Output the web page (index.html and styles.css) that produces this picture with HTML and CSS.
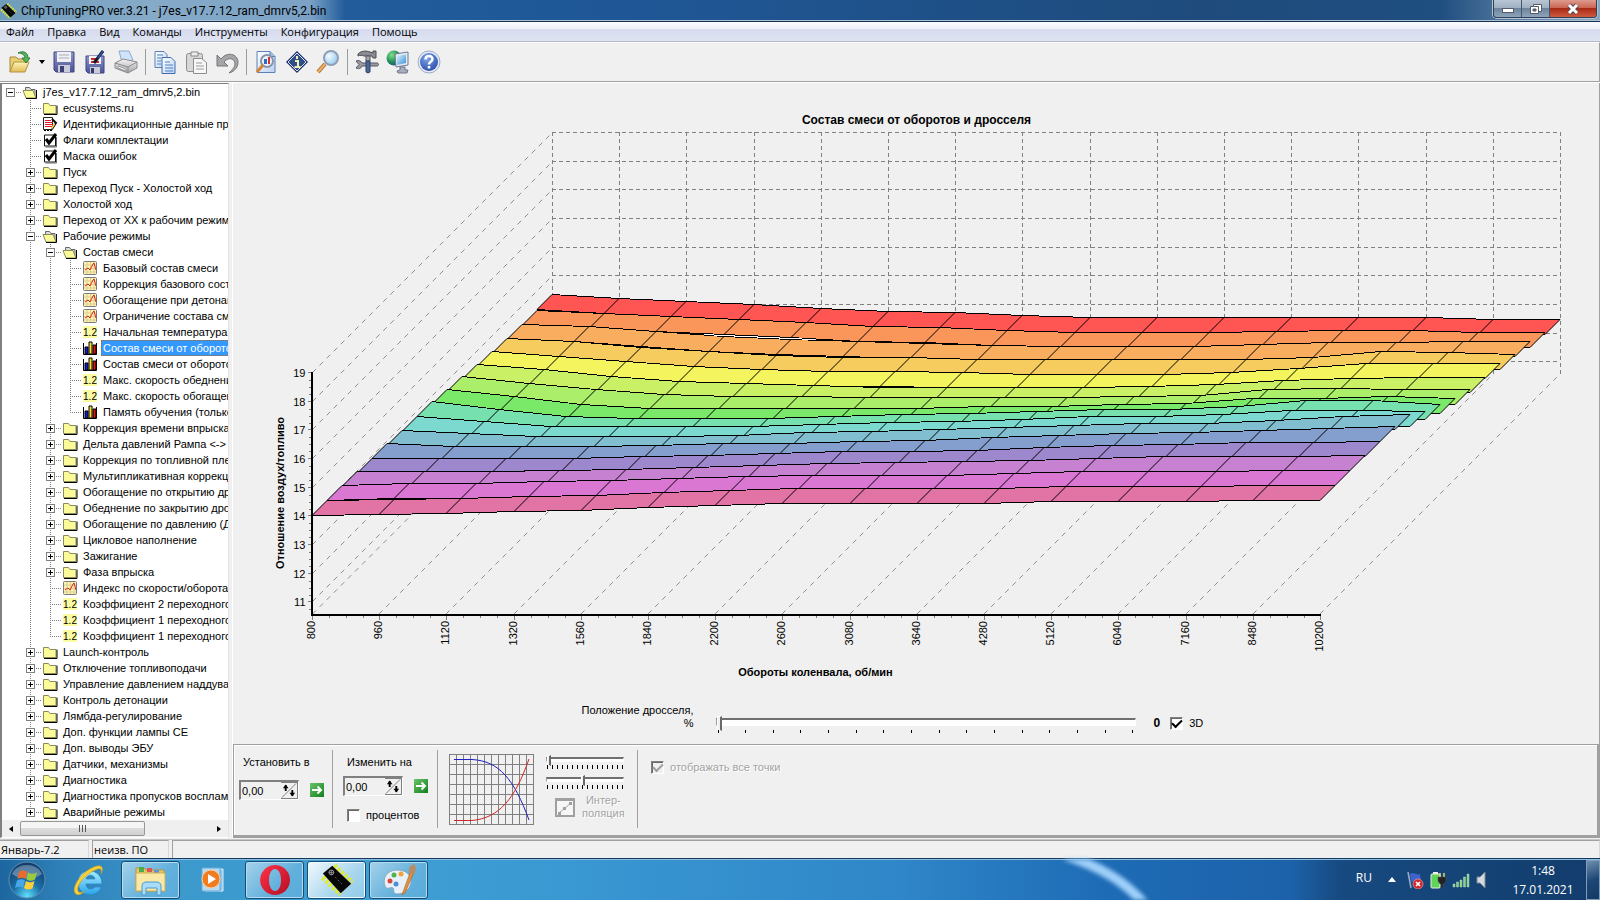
FILE: index.html
```html
<!DOCTYPE html>
<html lang="ru">
<head>
<meta charset="utf-8">
<title>ChipTuningPRO ver.3.21 - j7es_v17.7.12_ram_dmrv5,2.bin</title>
<link rel="stylesheet" href="styles.css">
</head>
<body>
<svg class="defs" width="0" height="0" aria-hidden="true">
  <defs>
    <linearGradient id="gFolder" x1="0" y1="0" x2="0" y2="1"><stop offset="0" stop-color="#fdf3b8"/><stop offset="1" stop-color="#e2bd55"/></linearGradient>
    <linearGradient id="gPage" x1="0" y1="0" x2="1" y2="1"><stop offset="0" stop-color="#fff"/><stop offset="1" stop-color="#b9d2f2"/></linearGradient>
    <linearGradient id="gFloppy" x1="0" y1="0" x2="0" y2="1"><stop offset="0" stop-color="#8f97cf"/><stop offset="1" stop-color="#4b5495"/></linearGradient>
    <linearGradient id="gGrey" x1="0" y1="0" x2="0" y2="1"><stop offset="0" stop-color="#f4f4f4"/><stop offset="1" stop-color="#a5a5a8"/></linearGradient>
    <radialGradient id="gLens" cx=".35" cy=".35" r=".8"><stop offset="0" stop-color="#f2fbff"/><stop offset="1" stop-color="#8fc4ee"/></radialGradient>
    <radialGradient id="gHelp" cx=".4" cy=".3" r=".8"><stop offset="0" stop-color="#7fa4e8"/><stop offset="1" stop-color="#2547a8"/></radialGradient>
    <radialGradient id="gGlobe" cx=".35" cy=".3" r=".8"><stop offset="0" stop-color="#7fe08a"/><stop offset=".6" stop-color="#1f8a55"/><stop offset="1" stop-color="#1b4d92"/></radialGradient>
    <linearGradient id="gScreen" x1="0" y1="0" x2="1" y2="1"><stop offset="0" stop-color="#d8f3ff"/><stop offset="1" stop-color="#3c8fd6"/></linearGradient>
    <linearGradient id="gGo" x1="0" y1="0" x2="1" y2="1"><stop offset="0" stop-color="#69c46a"/><stop offset="1" stop-color="#127f1c"/></linearGradient>
    <radialGradient id="gOrb" cx=".5" cy=".95" r=".9"><stop offset="0" stop-color="#5fe0ff"/><stop offset=".45" stop-color="#1b6fa8"/><stop offset="1" stop-color="#123e6c"/></radialGradient>
    <linearGradient id="gIe" x1="0" y1="0" x2="0" y2="1"><stop offset="0" stop-color="#a6ecff"/><stop offset="1" stop-color="#2aa5ea"/></linearGradient>
    <linearGradient id="gOpera" x1="0" y1="0" x2="1" y2="1"><stop offset="0" stop-color="#ff3347"/><stop offset="1" stop-color="#b60d22"/></linearGradient>
    <g id="i-chip">
      <path d="M3 13 22 31M15 1l19 18" stroke="#e2ea2c" stroke-width="6" stroke-dasharray="3 2"/>
      <path d="M3 9 13 1 33 20 22 30z" fill="#070707"/>
      <circle cx="12" cy="8" r="2.500" fill="none" stroke="#aaa"/><path d="M9.500 8h5M12 5.500v5" stroke="#aaa" stroke-width=".7"/><path d="M16 13l8 8" stroke="#666" stroke-dasharray="2 2"/>
    </g>
    <g id="t-folder"><path d="M1.500 3.500h5l1.500 2h6v8h-12.500z" fill="#fbfb9a" stroke="#8a8a5a"/><path d="M2 14.500h13V5.500" fill="none" stroke="#000"/></g>
    <g id="t-open"><path d="M3.500 3.500h4l1.500 2h4v8h-9z" fill="#ddd" stroke="#666"/><path d="M1 6.500h10l3 7.500H4z" fill="#fbfb9a" stroke="#8a8a5a"/><path d="M4 14.500h10.500V6" fill="none" stroke="#000"/></g>
    <g id="t-ident"><path d="M1.500 1.500h9v12h-9z" fill="#fff" stroke="#222"/><path d="M3 4.500h6M3 6.500h8M3 8.500h8M3 10.500h7" stroke="#e0162b"/><path d="M2 14.500h9" stroke="#000" stroke-dasharray="2 1"/><path d="M10 3l4 4-4 6" fill="none" stroke="#111" stroke-width="2"/><path d="M12.500 8 9.500 12.500" stroke="#f4df45" stroke-width="1.500"/></g>
    <g id="t-check"><path d="M2.500 3h11v11h-11z" fill="#fff" stroke="#111"/><path d="M14.500 5v10h-11" fill="none" stroke="#666"/><path d="M4 7l3 4 7-9" fill="none" stroke="#000" stroke-width="3"/></g>
    <g id="t-curve"><rect x="1.500" y="1.500" width="13" height="13" rx="1" fill="#fbf3b2" stroke="#7b7b7b"/><path d="M2 5h12M2 8.500h12M2 12h12M5 2v12M8.500 2v12M12 2v12" stroke="#ddd092"/><path d="M3 10l3-2 2 2 3-6 1-1 2 7" fill="none" stroke="#d8281c"/></g>
    <g id="t-num"><rect x="1" y="2" width="14" height="12" fill="#fbfba0"/><text x="8" y="12" text-anchor="middle" font-family="Liberation Sans, sans-serif" font-size="10" fill="#000">1.2</text></g>
    <g id="t-bars"><path d="M1.500 3v11.500h13V3" fill="#fff" stroke="#000"/><path d="M3 7h3v7H3z" fill="#1a1ad0" stroke="#000"/><path d="M7 2h3v12H7z" fill="#f4e42a" stroke="#000"/><path d="M11 5h3v9h-3z" fill="#d81414" stroke="#000"/></g>
    <g id="go"><rect width="14" height="14" fill="url(#gGo)"/><path d="M2 7h9M7.500 3.500 11 7l-3.500 3.500" fill="none" stroke="#fff" stroke-width="2"/></g>
  </defs>
</svg>

<header class="titlebar">
  <svg class="title-icon" viewBox="0 0 36 32"><use href="#i-chip"/></svg>
  <h1 class="title-text">ChipTuningPRO ver.3.21 - j7es_v17.7.12_ram_dmrv5,2.bin</h1>
  <div class="winbtns">
    <button class="wb" aria-label="Свернуть"><svg width="14" height="12"><rect x="1.500" y="5.500" width="11" height="4" fill="#fff" stroke="#555b6b"/></svg></button>
    <button class="wb" aria-label="Развернуть"><svg width="14" height="12"><path d="M4.500 1.500h8v7h-8z" fill="#fff" stroke="#555b6b"/><path d="M1.500 3.500h8v7h-8z" fill="#fff" stroke="#555b6b"/><path d="M4 6h3v2H4z" fill="#667" stroke="#555b6b"/></svg></button>
    <button class="wb wb-close" aria-label="Закрыть"><svg width="14" height="12"><path d="M3 2l8 8M11 2l-8 8" stroke="#5b4850" stroke-width="5"/><path d="M3 2l8 8M11 2l-8 8" stroke="#fff" stroke-width="3"/></svg></button>
  </div>
</header>

<nav class="menubar">
  <button>Файл</button><button>Правка</button><button>Вид</button><button>Команды</button><button>Инструменты</button><button>Конфигурация</button><button>Помощь</button>
</nav>

<div class="toolbar">
  <button class="tb" aria-label="Открыть"><svg viewBox="0 0 24 24"><path d="M2 22V7h6l2 2h9v4" fill="#e9cf74" stroke="#a8893a"/><path d="M2 22 6 12h15l-4 10z" fill="url(#gFolder)" stroke="#b0923f"/><path d="M10 3c6-3 10 0 10 5h2l-4 5-4-5h3c0-3-3-5-7-5z" fill="#57b35c" stroke="#2f7d39"/></svg></button>
  <button class="tb-drop" aria-label="Недавние файлы"><svg viewBox="0 0 6 4"><path d="M0 0h6L3 4z"/></svg></button>
  <button class="tb" aria-label="Сохранить"><svg viewBox="0 0 24 24"><path d="M2 2h20v20H4l-2-2z" fill="url(#gFloppy)" stroke="#3f4780"/><path d="M5 2h14v10H5z" fill="#eef0f4"/><path d="M7 5h10M7 8h10" stroke="#a9adba"/><path d="M6 15h12v7H6z" fill="#c9ccd8"/><path d="M8 16h4v6H8z" fill="#3b4177"/></svg></button>
  <button class="tb" aria-label="Сохранить как"><svg viewBox="0 0 24 24"><path d="M3 6h18v17H5l-2-2z" fill="url(#gFloppy)" stroke="#3f4780"/><path d="M6 6h12v8H6z" fill="#f4f4f7"/><path d="M8 9h6M8 12h8" stroke="#d02a2a" stroke-width="2"/><path d="M7 17h10v6H7z" fill="#c9ccd8"/><path d="M8 18h3v5H8z" fill="#333a70"/><path d="M20 1 11 13" stroke="#111a30" stroke-width="3"/><path d="M20 1l-5 7" stroke="#2b4f9c" stroke-width="2"/></svg></button>
  <button class="tb" aria-label="Печать"><svg viewBox="0 0 24 24"><path d="M5 1l10 0 4 9-11 2z" fill="#cfe4fb" stroke="#8fa9cc"/><path d="M1 13l8-4 14 3v6l-9 5L1 18z" fill="url(#gGrey)" stroke="#8b8b8f"/><path d="M1 13l13 4 9-5M14 17v6" fill="none" stroke="#8b8b8f"/><path d="M4 16l8 3v2l-8-3z" fill="#fff" stroke="#999"/></svg></button>
  <span class="tb-sep"></span>
  <button class="tb" aria-label="Копировать"><svg viewBox="0 0 24 24"><path d="M2 1.500h9l3 3v13H2z" fill="url(#gPage)" stroke="#5b82b8"/><path d="M9 7.500h9l4 4v12H9z" fill="url(#gPage)" stroke="#3f6cab"/><path d="M4 5h6M4 8h4M4 11h4M4 14h4M12 12h5M12 15h8M12 18h8M12 21h8" stroke="#4c83c8"/></svg></button>
  <button class="tb" aria-label="Вставить"><svg viewBox="0 0 24 24"><rect x="2.500" y="3.500" width="16" height="18" rx="2" fill="#d7d7d7" stroke="#8e8e8e"/><path d="M7 2h7v4H7z" fill="#eee" stroke="#888"/><path d="M9.500 8.500h8l5 4v11h-13z" fill="#f7f7f7" stroke="#8e8e8e"/><path d="M12 13h6M12 16h8M12 19h8" stroke="#999"/></svg></button>
  <button class="tb" aria-label="Отменить"><svg viewBox="0 0 24 24"><path d="M2 5v11h11l-4-4c5-6 11-3 11 2 0 3-3 6-6 9 7-2 9-7 9-11C23 4 12 1 6 9z" fill="#a5a5a8" stroke="#77777b"/></svg></button>
  <span class="tb-sep"></span>
  <button class="tb" aria-label="Просмотр"><svg viewBox="0 0 24 24"><path d="M3 1.500h13l5 5v16H3z" fill="url(#gPage)" stroke="#5b82b8"/><path d="M16 1.500v5h5" fill="#9fc0ea" stroke="#5b82b8"/><circle cx="13" cy="11" r="6" fill="#eaf4ff" stroke="#8795a8" stroke-width="2"/><path d="M10 9h3v5h-3z" fill="#2c6cc8"/><path d="M14 7h2v7h-2z" fill="#d93232"/><path d="M9 15l-6 7" stroke="#d98336" stroke-width="3"/></svg></button>
  <button class="tb" aria-label="Информация"><svg viewBox="0 0 24 24"><path d="M12 1l11 11-11 11L1 12z" fill="#1f2c6b"/><path d="M12 3l9 9-9 9-9-9z" fill="#2f4f86" stroke="#d5def5"/><path d="M12 6v3M10 11h3v6M9.500 17h6" stroke="#f3f0b4" stroke-width="2" fill="none"/></svg></button>
  <button class="tb" aria-label="Поиск"><svg viewBox="0 0 24 24"><path d="M9 14 2 22" stroke="#b56d2b" stroke-width="4"/><path d="M9 14 2 22" stroke="#e8b069" stroke-width="2"/><circle cx="15" cy="8" r="7" fill="url(#gLens)" stroke="#8f9eb4" stroke-width="2"/></svg></button>
  <span class="tb-sep"></span>
  <button class="tb" aria-label="Настройки"><svg viewBox="0 0 24 24"><path d="M3 4c4-4 9-3 12-2l3 1V1h3v7h-3l-1-2H9C7 5 5 5 3 6z" fill="#8a8d93" stroke="#4a4c52"/><path d="M11 6h4v5h-4z" fill="#aaa" stroke="#55585f"/><path d="M1 11c3-1 5 0 6 2h15c2 0 2 3 0 3H7c-1 3-4 3-6 2l3-3.500z" fill="#989ba2" stroke="#55585f"/><path d="M11 11h4v11c0 1-4 1-4 0z" fill="#4d6694" stroke="#2f4269"/></svg></button>
  <button class="tb" aria-label="Сеть"><svg viewBox="0 0 24 24"><circle cx="8" cy="8" r="7.500" fill="url(#gGlobe)"/><path d="M9 4l13-2v13l-12 2z" fill="#e4e9f2" stroke="#6c7b94"/><path d="M11 6l9-1.500V13l-9 2z" fill="url(#gScreen)"/><path d="M14 17h5v3h3l-1 3h-9l-1-2 3-1z" fill="#a8aebb" stroke="#6f7788"/></svg></button>
  <button class="tb" aria-label="Справка"><svg viewBox="0 0 24 24"><circle cx="12" cy="12" r="11" fill="#e4e9f5" stroke="#9fabc9"/><circle cx="12" cy="12" r="9" fill="url(#gHelp)"/><path d="M8.500 9.500C8.500 5 15.500 5 15.500 9c0 3-3.500 2.500-3.500 5.500M12 16v2.500" fill="none" stroke="#fff" stroke-width="2.500"/></svg></button>
</div>

<main class="work">
  <aside class="sidebar">
    <ul class="tree" id="tree"></ul>
    <div class="hscroll">
      <button class="hs-arrow" aria-label="Влево"><svg viewBox="0 0 4 6"><path d="M4 0v6L0 3z"/></svg></button>
      <div class="hs-track"><div class="hs-thumb"><i></i><i></i><i></i></div></div>
      <button class="hs-arrow" aria-label="Вправо"><svg viewBox="0 0 4 6"><path d="M0 0v6l4-3z"/></svg></button>
    </div>
  </aside>

  <section class="content">
    <div class="chart-wrap"><svg class="chart" id="chart" viewBox="233 83 1365 617" role="img" aria-label="Состав смеси от оборотов и дросселя"></svg></div>
    <div class="throttle">
      <label class="throttle-label" for="thr">Положение дросселя,<br>%</label>
      <div class="throttle-slider">
        <input class="range range-big" id="thr" type="range" min="0" max="15" value="0">
        <div class="ticks ticks-big" id="ticksBig"></div>
      </div>
      <output class="throttle-value" for="thr">0</output>
      <label class="check"><input type="checkbox" checked><span>3D</span></label>
    </div>

    <div class="edit">
      <div class="grp grp-set">
        <label for="setv">Установить в</label>
        <div class="line">
          <span class="spin"><input id="setv" type="text" value="0,00"><button class="updown" aria-label="Изменить значение"><svg viewBox="0 0 17 15"><path d="M1 15 16 0" stroke="#777"/><path d="M5 2v6M12 7v6" stroke="#000" stroke-width="2"/><path d="M2 5l3-4 3 4zM9 10l3 4 3-4z"/></svg></button></span>
          <button class="go" aria-label="Установить"><svg viewBox="0 0 14 14"><use href="#go"/></svg></button>
        </div>
      </div>
      <div class="grp grp-change">
        <label for="chgv">Изменить на</label>
        <div class="line">
          <span class="spin"><input id="chgv" type="text" value="0,00"><button class="updown" aria-label="Изменить значение"><svg viewBox="0 0 17 15"><path d="M1 15 16 0" stroke="#777"/><path d="M5 2v6M12 7v6" stroke="#000" stroke-width="2"/><path d="M2 5l3-4 3 4zM9 10l3 4 3-4z"/></svg></button></span>
          <button class="go" aria-label="Применить"><svg viewBox="0 0 14 14"><use href="#go"/></svg></button>
        </div>
        <label class="check check-pct"><input type="checkbox"><span>процентов</span></label>
      </div>
      <div class="grp grp-curve">
        <svg class="curve" id="curve" viewBox="0 0 86 72"></svg>
        <div class="interp">
          <input class="range" type="range" min="0" max="15" value="0" aria-label="Кривая 1">
          <div class="ticks" id="ticksA"></div>
          <input class="range" type="range" min="0" max="15" value="7" aria-label="Кривая 2">
          <div class="ticks" id="ticksB"></div>
          <button class="interp-btn" disabled><svg viewBox="0 0 20 19"><rect x="1" y="1" width="18" height="17" fill="#f6f6f6" stroke="#a0a0a0" stroke-width="2"/><path d="M1 2h18" stroke="#a0a0a0" stroke-width="2"/><path d="M4 15 16 5" stroke="#a0a0a0"/><path d="M3 14h3v3H3zM8 9h3v3H8zM14 4h3v3h-3z" fill="#a0a0a0"/></svg><span>Интер-<br>поляция</span></button>
        </div>
      </div>
      <div class="grp grp-points">
        <label class="check check-off"><input type="checkbox" checked disabled><span>отображать все точки</span></label>
      </div>
    </div>
  </section>
</main>

<footer class="status"><span class="st st-ecu">Январь-7.2</span><span class="st st-fw">неизв. ПО</span><span class="st st-rest"></span></footer>

<div class="taskbar">
  <svg class="streak" viewBox="0 0 200 42" preserveAspectRatio="none"><path d="M25 -4C60 8 85 22 108 50" fill="none" stroke="#9fd0fa" stroke-width="10"/></svg>
  <button class="orb" aria-label="Пуск"><svg viewBox="0 0 38 38"><circle cx="19" cy="19" r="18" fill="url(#gOrb)" stroke="#5f8fb0"/><path d="M4 13C9 1 29 1 34 13 26 19 12 19 4 13z" fill="#fff" opacity=".3"/><path d="M11 11c3-2 5-2 8 0l-1.500 7c-3-2-5-1.500-8 0z" fill="#ee6a2c"/><path d="M20 11.500c3 2 5.500 1.500 9 0l-2 7c-3 1.500-5 2-8.500 0z" fill="#9bcb3c"/><path d="M9 19.500c3-1.500 5-2 8 0l-2 7.500c-2-2-5-1.500-8 0z" fill="#48a7e8"/><path d="M18 20c3.500 2 5.500 1.500 8.500 0l-2 7.500c-3 1.500-5.500 1.500-8.500-.5z" fill="#fbcf3a"/></svg></button>
  <button class="task task-flat" aria-label="Internet Explorer"><svg viewBox="0 0 34 32"><path d="M6 18c0-15 24-15 24 2H14c0 6 7 6 9 3h6c-3 11-23 11-23-5zm8-3h9c-1-5-8-5-9 0z" fill="url(#gIe)" stroke="#2a86c4" stroke-width=".7" fill-rule="evenodd"/><path d="M3 29C-1 22 12 5 25 2c5-1 7 2 4 8 1-4 0-6-3-5C16 8 4 20 6 27c1 2 4 2 7 0-4 4-8 5-10 2z" fill="#f6cf3a" stroke="#c99a1c" stroke-width=".6"/></svg></button>
  <button class="task" aria-label="Проводник"><svg viewBox="0 0 34 32"><path d="M2 4h8l2 2h18v21H2z" fill="#e9c766" stroke="#b8953c"/><path d="M5 3h5v5H5z" fill="#4cab4c"/><path d="M13 4h5v4h-5z" fill="#d55"/><path d="M20 6h5v4h-5z" fill="#5a95dd"/><path d="M2 9h29v18H2z" fill="#f8e9a6" stroke="#cfae55"/><path d="M8 31V22c0-3 2-4 5-4h9c3 0 5 1 5 4v9h-4v-7H12v7z" fill="#a9dcf8" stroke="#4c9bcf"/></svg></button>
  <button class="task task-flat" aria-label="Проигрыватель"><svg viewBox="0 0 34 32"><path d="M9 5h18v22H9z" fill="#8fc4e8" stroke="#d8effc"/><path d="M6 4h18v23H6z" fill="#b5daf2" stroke="#6aa9d4"/><circle cx="15" cy="15" r="9" fill="#f07c1f" stroke="#fbd0a3"/><path d="M12 10v10l8-5z" fill="#fff"/></svg></button>
  <button class="task" aria-label="Opera"><svg viewBox="0 0 34 32"><path d="M17 1a15 15 0 1 0 .1 0zm0 4c8 0 8 22 0 22s-8-22 0-22z" fill="url(#gOpera)" fill-rule="evenodd"/></svg></button>
  <button class="task task-active" aria-label="ChipTuningPRO"><svg viewBox="0 0 36 32"><use href="#i-chip"/></svg></button>
  <button class="task" aria-label="Paint"><svg viewBox="0 0 34 32"><path d="M15 6C5 6 0 14 3 22c2 5 6 0 8 2 2 3-1 5 4 6 8 0 14-6 14-13S23 6 15 6z" fill="#e8f1fa" stroke="#8da9c4"/><circle cx="8" cy="17" r="2.500" fill="#d64b3f"/><circle cx="12" cy="11" r="2.500" fill="#55b04c"/><circle cx="19" cy="10" r="2.500" fill="#f0a33a"/><circle cx="14" cy="20" r="2.500" fill="#4c8fd8"/><path d="M29 6 21 28l-1 3 3-2 9-21z" fill="#e38f3c" stroke="#a8622a" stroke-width=".6"/><path d="M27 8c-1-5 2-7 6-8 1 4 1 8-1 10z" fill="#b98d63"/></svg></button>
  <div class="tray">
    <button class="lang">RU</button>
    <button class="tray-ic" aria-label="Скрытые значки"><svg viewBox="0 0 18 18"><path d="M5 11h8L9 6z" fill="#fff"/></svg></button>
    <svg viewBox="0 0 18 18" class="tray-svg"><path d="M2 1l3 16" stroke="#9aa9c4" stroke-width="1.500"/><path d="M4 3c4-3 6 2 10 0l1 8c-4 2-6-2-10 0z" fill="#3f63c9"/><circle cx="12" cy="13" r="5" fill="#d2252b" stroke="#f4b4b4" stroke-width=".6"/><path d="M10 11l4 4M14 11l-4 4" stroke="#fff" stroke-width="1.700"/></svg>
    <svg viewBox="0 0 18 18" class="tray-svg"><rect x="2" y="3" width="9" height="14" rx="1" fill="#5fd35a" stroke="#e4f4e0"/><path d="M4 1h5v2H4z" fill="#eee"/><path d="M11 2v4M15 2v4" stroke="#e8d27a" stroke-width="1.500"/><path d="M9 6h8v4l-2 3h-1v4h-2v-4h-1l-2-3z" fill="#222" stroke="#555" stroke-width=".5"/></svg>
    <svg viewBox="0 0 18 18" class="tray-svg"><path d="M1 13h2v3H1zM4.500 11h2v5h-2zM8 9h2v7H8zM11.500 6h2v10h-2zM15 3h2v13h-2z" fill="#7fd183" stroke="#c9eccb" stroke-width=".4"/></svg>
    <svg viewBox="0 0 18 18" class="tray-svg"><path d="M2 6h3l5-5v16l-5-5H2z" fill="#d5d9df" stroke="#7c8590"/></svg>
    <button class="clock"><span>1:48</span><span>17.01.2021</span></button>
    <button class="desk" aria-label="Свернуть все окна"></button>
  </div>
</div>
<script src="app.js"></script>
</body>
</html>
```
FILE: styles.css
```css
* { box-sizing: border-box; }
html, body { height: 100%; }
body {
  margin: 0;
  min-height: 100vh;
  display: flex;
  flex-direction: column;
  background: #f0f0f0;
  color: #000;
  font: 11px/13px "Liberation Sans", Arial, sans-serif;
  overflow: hidden;
}
button { font: inherit; color: inherit; border: 0; background: none; padding: 0; margin: 0; }
svg { display: block; }
.defs { position: absolute; }

/* window frame */
.titlebar {
  flex: none;
  height: 22px;
  display: flex;
  align-items: center;
  gap: 4px;
  background:
    linear-gradient(90deg, #6f9cba 0, #86abc9 150px, #7ba2c6 310px, rgba(30, 84, 146, 0) 345px),
    linear-gradient(90deg, #2461a0 0, #1f5796 40%, #1e4b7c 75%, #1f4e80 90%, #6f90ae 97%, #8ba7bf 100%);
  border-bottom: 1px solid #16304e;
  box-shadow: inset 0 -1px #a9c0d6;
}
.title-icon { width: 17px; height: 18px; }
.title-text { margin: 0; flex: 1; font: 12px/20px Roboto, "Open Sans", sans-serif; }
.winbtns {
  align-self: flex-start;
  display: flex;
  height: 18px;
  margin-right: 3px;
  border: 1px solid #2f3f55;
  border-top: 0;
  border-radius: 0 0 4px 4px;
  overflow: hidden;
  box-shadow: 0 0 0 1px #b4c4d4;
}
.wb {
  width: 28px;
  display: grid;
  place-items: center;
  background: linear-gradient(#b9c6d4 0, #9fb0c2 45%, #6d849c 50%, #8ea4ba 100%);
  border-right: 1px solid #46566b;
}
.wb-close { width: 46px; border: 0; background: linear-gradient(#dd9c8e 0, #cc6654 45%, #a92a17 50%, #cf5a40 100%); }

.menubar {
  flex: none;
  height: 20px;
  display: flex;
  gap: 13px;
  padding: 0 6px;
  align-items: center;
  font: 11px/18px "Open Sans", "Noto Sans", sans-serif;
  background: linear-gradient(#fbfcfe 0, #eef1f9 35%, #d6dcee 40%, #dfe4f3 100%);
  border-bottom: 1px solid #b5b9c9;
}
.toolbar {
  flex: none;
  height: 40px;
  display: flex;
  align-items: center;
  gap: 7px;
  padding: 0 8px;
  border-top: 1px solid #fff;
  border-bottom: 1px solid #a0a0a0;
  border-right: 1px solid #a0a0a0;
}
.tb, .tb svg { width: 24px; height: 24px; }
.tb-drop { width: 6px; }
.tb-drop svg { width: 6px; height: 4px; }
.tb-sep { width: 1px; height: 26px; background: #9c9c9c; }

/* work area */
.work { flex: 1; min-height: 0; display: flex; gap: 3px; border-top: 1px solid #fff; }
.sidebar {
  flex: none;
  width: 229px;
  display: flex;
  flex-direction: column;
  background: #fff;
  border: 2px solid #808080;
  border-width: 1px 1px 1px 2px;
  border-right-color: #e3e3e3;
  border-bottom-color: #fff;
}
.tree { flex: 1; min-height: 0; margin: 0; padding: 0; list-style: none; overflow: hidden; white-space: nowrap; }
.row { display: flex; height: 16px; align-items: center; }
.cell {
  flex: none;
  width: 20px;
  height: 16px;
  display: flex;
  align-items: center;
  padding-left: 4px;
}
.v { background: repeating-linear-gradient(#808080 0 1px, transparent 1px 2px) 8px 0 / 1px 16px no-repeat; }
.v-half { background: repeating-linear-gradient(#808080 0 1px, transparent 1px 2px) 8px 0 / 1px 8px no-repeat; }
.dash { flex: 1; margin-left: 4px; height: 1px; background: repeating-linear-gradient(90deg, #808080 0 1px, transparent 1px 2px); }
.box {
  flex: none;
  width: 9px;
  height: 9px;
  border: 1px solid #808080;
  background: linear-gradient(#000, #000) center / 5px 1px no-repeat, #fff;
}
.box-plus { background: linear-gradient(#000, #000) center / 5px 1px no-repeat, linear-gradient(#000, #000) center / 1px 5px no-repeat, #fff; }
.box + .dash { margin-left: 1px; }
.tree-icon { flex: none; width: 16px; height: 16px; }
.name { margin-left: 3px; padding: 0 2px; line-height: 16px; }
.name-sel { background: #3399ff; color: #fff; outline: 1px dotted #b8651c; outline-offset: -1px; }

.hscroll { flex: none; height: 17px; display: flex; align-items: center; background: #efefef; }
.hs-arrow { width: 18px; display: grid; place-items: center; }
.hs-arrow svg { width: 4px; height: 6px; }
.hs-track { flex: 1; }
.hs-thumb {
  width: 66%;
  height: 15px;
  display: flex;
  justify-content: center;
  align-items: center;
  gap: 2px;
  border: 1px solid #979797;
  border-radius: 2px;
  background: linear-gradient(#f5f5f5 0 45%, #dcdcdc 50%, #d0d0d0 100%);
}
.hs-thumb i { width: 1px; height: 7px; background: #555; }

.content {
  flex: 1;
  min-width: 0;
  display: flex;
  flex-direction: column;
  border-left: 1px solid #fff;
  border-right: 1px solid #a0a0a0;
}
.chart-wrap { flex: 1; min-height: 0; }
.chart { width: 100%; height: 100%; }
.chart text { font-family: "Liberation Sans", Arial, sans-serif; font-size: 11px; }
.chart .bold { font-weight: bold; }
.chart .head { font-size: 12px; }
.g { stroke: #808080; stroke-dasharray: 4 3; fill: none; shape-rendering: crispEdges; }
.gd { stroke: #909090; stroke-dasharray: 5 5; fill: none; }
.edge { stroke: #000; fill: none; shape-rendering: crispEdges; }
.cross { stroke: #000; fill: none; }
.axis { stroke: #000; stroke-width: 2; shape-rendering: crispEdges; }
.tick { stroke: #808080; shape-rendering: crispEdges; }

.throttle { flex: none; height: 44px; display: flex; align-items: flex-start; padding-left: 25%; }
.throttle-label { width: 119px; text-align: right; margin-top: 4px; white-space: nowrap; flex: none; }
.throttle-slider { width: 420px; margin: 14px 16px 0 22px; }
.throttle-value { font-weight: bold; font-size: 12px; margin: 17px 10px 0 2px; }
.throttle .check { margin-top: 17px; }

.range { appearance: none; display: block; width: 100%; height: 11px; margin: 0; background: none; }
.range::-webkit-slider-runnable-track { height: 5px; background: #fff; border: 1px solid #fff; border-top: 2px solid #707070; border-left: 1px solid #a0a0a0; }
.range::-webkit-slider-thumb { appearance: none; width: 4px; height: 11px; margin-top: -4px; background: #f0f0f0; border: 1px solid #fff; border-right: 2px solid #696969; }
.range-big { height: 16px; }
.range-big::-webkit-slider-runnable-track { height: 8px; }
.range-big::-webkit-slider-thumb { width: 5px; height: 15px; }
.ticks { display: flex; justify-content: space-between; padding: 0 1px; height: 4px; }
.ticks i { width: 1px; height: 4px; background: #000; }
.ticks-big i { height: 3px; }
.ticks-big { padding: 0 2px; }

.check { display: flex; align-items: center; gap: 6px; white-space: nowrap; }
.check input {
  appearance: none;
  flex: none;
  width: 13px;
  height: 13px;
  margin: 0;
  background: #fff;
  border: 1px solid #808080;
  border-right-color: #fff;
  border-bottom-color: #fff;
  box-shadow: inset 1px 1px #696969;
  display: grid;
  place-items: center;
}
.check input:checked::before {
  content: "";
  width: 8px;
  height: 4px;
  border: solid #000;
  border-width: 0 0 2px 2px;
  transform: rotate(-45deg) translate(1px, -1px);
}
.check-off { color: #a3a3a3; text-shadow: 1px 1px #fff; }
.check-off input { background: #f0f0f0; }
.check-off input:checked::before { border-color: #a0a0a0; }

.edit {
  flex: none;
  display: flex;
  height: 94px;
  padding: 5px 0 7px;
  border: 1px solid #a0a0a0;
  border-width: 1px 2px 3px 1px;
  box-shadow: inset 1px 1px #fff;
}
.grp { border-right: 1px solid #a0a0a0; display: flex; flex-direction: column; }
.grp-set { width: 99px; padding: 6px 0 0 5px; gap: 11px; }
.grp-set > label { padding-left: 4px; }
.grp-change { width: 105px; padding: 6px 0 0 10px; gap: 7px; }
.grp-change > label:first-child { padding-left: 4px; }
.line { display: flex; align-items: center; gap: 11px; }
.spin { display: flex; width: 60px; height: 20px; border: 2px solid #808080; border-right: 1px solid #fff; border-bottom: 1px solid #fff; }
.spin input { width: 40px; min-width: 0; border: 0; padding: 0 1px; background: #f0f0f0; font: 11px/16px "Liberation Sans", Arial, sans-serif; }
.updown { width: 17px; border: 1px solid #808080; border-left: 0; }
.updown svg { width: 16px; height: 15px; }
.go, .go svg { width: 14px; height: 14px; }
.check-pct { padding: 6px 0 0 4px; }
.grp-curve { width: 200px; flex-direction: row; padding: 4px 0 0 11px; gap: 11px; align-items: flex-start; }
.curve { width: 86px; height: 72px; flex: none; }
.interp { width: 78px; }
.interp .ticks { margin-bottom: 5px; }
.interp-btn { display: flex; align-items: center; gap: 7px; margin: 5px 0 0 9px; color: #a3a3a3; text-shadow: 1px 1px #fff; }
.interp-btn svg { width: 20px; height: 19px; }
.grp-points { border: 0; padding: 11px 0 0 13px; }

.status { flex: none; height: 19px; margin-top: 1px; display: flex; gap: 3px; border-top: 1px solid #c8c8c8; font: 11px/17px "Open Sans", "Noto Sans", sans-serif; }
.st { border-right: 1px solid #d8d8d8; border-left: 1px solid #a0a0a0; border-top: 1px solid #a0a0a0; padding-left: 1px; }
.st-ecu { width: 89px; border-left: 0; }
.st-fw { width: 77px; }
.st-rest { flex: 1; }

/* taskbar */
.taskbar {
  flex: none;
  position: relative;
  height: 42px;
  display: flex;
  align-items: center;
  gap: 3px;
  padding-left: 8px;
  border-top: 1px solid #16385c;
  box-shadow: inset 0 1px #8cc0e2;
  background: linear-gradient(90deg, #1d669f 0, #2f80b8 60px, #3b99cc 180px, #3f9fd3 400px, #3a98d2 560px, #2f86c8 900px, #1e6cb6 1100px, #1c62aa 1290px, #174a80 1340px, #123c6c 1600px);
}
.streak { position: absolute; left: 65%; top: 0; width: 200px; height: 41px; filter: blur(2px); }
.orb { margin-right: 10px; }
.orb, .orb svg { width: 38px; height: 38px; }
.task {
  width: 59px;
  height: 38px;
  display: grid;
  place-items: center;
  border: 1px solid #164c78;
  border-radius: 3px;
  background: linear-gradient(135deg, #a5d2ea, #62b0dc 60%, #58acdb);
  box-shadow: inset 0 0 0 1px #b4ddf2;
}
.task svg { width: 34px; height: 32px; }
.task-flat { border-color: transparent; background: none; box-shadow: none; }
.task-active { background: linear-gradient(135deg, #f2f9fd, #a9d6ee 60%, #8fcbea); box-shadow: inset 0 0 0 1px #eefaff; }
.tray { position: relative; margin-left: auto; height: 100%; display: flex; align-items: center; gap: 5px; color: #fff; font: 12px/19px "Open Sans", "Noto Sans", sans-serif; }
.lang { margin: 0 6px 4px 0; }
.tray-ic, .tray-ic svg, .tray-svg { width: 18px; height: 18px; }
.clock { width: 76px; display: flex; flex-direction: column; align-items: center; margin-left: 7px; }
.desk { width: 14px; height: 40px; border: 1px solid #7f9dbb; background: linear-gradient(160deg, #6f8fae, #1d4775 50%, #143a66); }
```
FILE: app.js
```js
(function () {
  // [depth, expander, icon, label]
  var rows = [
    [0, '-', 'open', 'j7es_v17.7.12_ram_dmrv5,2.bin'],
    [1, '', 'folder', 'ecusystems.ru'],
    [1, '', 'ident', 'Идентификационные данные прошивки'],
    [1, '', 'check', 'Флаги комплектации'],
    [1, '', 'check', 'Маска ошибок'],
    [1, '+', 'folder', 'Пуск'],
    [1, '+', 'folder', 'Переход Пуск - Холостой ход'],
    [1, '+', 'folder', 'Холостой ход'],
    [1, '+', 'folder', 'Переход от ХХ к рабочим режимам'],
    [1, '-', 'open', 'Рабочие режимы'],
    [2, '-', 'open', 'Состав смеси'],
    [3, '', 'curve', 'Базовый состав смеси'],
    [3, '', 'curve', 'Коррекция базового состава'],
    [3, '', 'curve', 'Обогащение при детонации'],
    [3, '', 'curve', 'Ограничение состава смеси'],
    [3, '', 'num', 'Начальная температура'],
    [3, '', 'bars', 'Состав смеси от оборотов', true],
    [3, '', 'bars', 'Состав смеси от оборотов'],
    [3, '', 'num', 'Макс. скорость обеднения'],
    [3, '', 'num', 'Макс. скорость обогащения'],
    [3, '', 'bars', 'Память обучения (только'],
    [2, '+', 'folder', 'Коррекция времени впрыска'],
    [2, '+', 'folder', 'Дельта давлений Рампа <->'],
    [2, '+', 'folder', 'Коррекция по топливной пленке'],
    [2, '+', 'folder', 'Мультипликативная коррекция'],
    [2, '+', 'folder', 'Обогащение по открытию дросселя'],
    [2, '+', 'folder', 'Обеднение по закрытию дросселя'],
    [2, '+', 'folder', 'Обогащение по давлению (ДАД)'],
    [2, '+', 'folder', 'Цикловое наполнение'],
    [2, '+', 'folder', 'Зажигание'],
    [2, '+', 'folder', 'Фаза впрыска'],
    [2, '', 'curve', 'Индекс по скорости/оборотам'],
    [2, '', 'num', 'Коэффициент 2 переходного'],
    [2, '', 'num', 'Коэффициент 1 переходного'],
    [2, '', 'num', 'Коэффициент 1 переходного'],
    [1, '+', 'folder', 'Launch-контроль'],
    [1, '+', 'folder', 'Отключение топливоподачи'],
    [1, '+', 'folder', 'Управление давлением наддува'],
    [1, '+', 'folder', 'Контроль детонации'],
    [1, '+', 'folder', 'Лямбда-регулирование'],
    [1, '+', 'folder', 'Доп. функции лампы CE'],
    [1, '+', 'folder', 'Доп. выводы ЭБУ'],
    [1, '+', 'folder', 'Датчики, механизмы'],
    [1, '+', 'folder', 'Диагностика'],
    [1, '+', 'folder', 'Диагностика пропусков воспламенения'],
    [1, '+', 'folder', 'Аварийные режимы']
  ];
  function continues(i, d) {
    for (var j = i + 1; j < rows.length; j++) {
      if (rows[j][0] < d) return false;
      if (rows[j][0] === d) return true;
    }
    return false;
  }
  document.getElementById('tree').innerHTML = rows.map(function (r, i) {
    var h = '';
    for (var d = 0; d < r[0]; d++) h += '<span class="cell' + (d && continues(i, d) ? ' v' : '') + '"></span>';
    var v = r[0] === 0 ? '' : continues(i, r[0]) ? ' v' : ' v-half';
    h += '<span class="cell' + v + '">';
    if (r[1]) h += '<span class="box' + (r[1] === '+' ? ' box-plus' : '') + '"></span>';
    h += '<span class="dash"></span></span>';
    h += '<svg class="tree-icon" viewBox="0 0 16 16"><use href="#t-' + r[2] + '"/></svg>';
    h += '<span class="name' + (r[4] ? ' name-sel' : '') + '">' + r[3].replace(/</g, '&lt;').replace(/>/g, '&gt;') + '</span>';
    return '<li class="row">' + h + '</li>';
  }).join('');

  ['ticksBig', 'ticksA', 'ticksB'].forEach(function (id) {
    document.getElementById(id).innerHTML = new Array(17).join('<i></i>');
  });

  // back edge heights of each ribbon, front to back, in thirds of a unit below 280
  var edges = [
    [661,656,655,649,646,635,631,625,625,625,624,619,619,619,615,615],
    [616,610,608,604,601,595,589,586,586,586,580,574,574,574,571,571],
    [574,573,572,570,566,560,556,549,545,544,541,535,529,529,529,526],
    [535,535,535,535,529,526,520,514,514,511,502,496,491,485,485,482],
    [490,499,499,499,495,490,490,484,481,470,466,460,455,451,443,439],
    [451,460,469,469,468,464,455,452,447,440,436,430,430,421,407,401],
    [409,424,439,439,439,438,433,426,422,416,409,409,403,391,391,394],
    [364,388,409,415,415,415,409,403,400,393,388,388,379,361,361,371],
    [328,349,373,385,385,385,385,385,379,378,371,369,355,354,349,355],
    [289,310,328,343,349,349,352,352,352,352,349,344,328,325,327,328],
    [253,268,289,304,308,314,320,320,322,322,319,313,299,295,290,290],
    [214,229,244,259,268,274,274,277,283,283,283,277,264,250,250,250],
    [175,184,200,214,224,230,232,238,238,238,238,238,230,214,217,223],
    [133,139,154,169,178,184,188,194,199,199,199,192,187,186,184,184],
    [89,99,109,118,126,139,142,149,155,157,157,153,149,149,155,155],
    [43,55,64,73,83,94,97,104,110,112,112,112,112,112,118,118]
  ];
  var colors = ['#e273a5','#da77d3','#c681d0','#9d87cd','#849ece','#81bed0','#7cd9cf','#76e0af','#7ae869','#abee69','#caf065','#f4f45e','#f6cc5e','#f9ad5e','#fa965a','#ff5553'];
  var X0 = 311, STEP = 67.2, s = '';
  function line(c, x1, y1, x2, y2) {
    return '<line class="' + c + '" x1="' + x1 + '" y1="' + y1 + '" x2="' + x2 + '" y2="' + y2 + '"/>';
  }
  function xi(i) { return Math.round(X0 + STEP * i) + 0.5; }
  var i, k, y;
  for (i = 0; i < 9; i++) {
    y = Math.round(372 + 28.65 * i) + 0.5;
    s += line('g', 551, y - 240, 1559, y - 240) + line('gd', 312, y, 552, y - 240);
  }
  s += line('gd', 312, 614, 552, 374);
  for (i = 0; i < 16; i++) {
    s += line('g', xi(i) + 240, 132, xi(i) + 240, 375);
    if (i) s += line('gd', xi(i), 614, xi(i) + 240, 374);
  }
  for (k = 15; k >= 0; k--) {
    var back = [], front = [], cross = '';
    for (i = 0; i < 16; i++) {
      var bx = xi(i) + 15 * (k + 1), by = Math.round(280 + edges[k][i] / 3) + 0.5;
      back.push(bx + ' ' + by);
      front.push((bx - 15) + ' ' + (by + 15));
      cross += line('cross', bx - 15, by + 15, bx, by);
    }
    s += '<polygon fill="' + colors[k] + '" points="' + back.concat(front.slice().reverse()).join(' ') + '"/>' +
      '<polyline class="edge" points="' + back.join(' ') + '"/><polyline class="edge" points="' + front.join(' ') + '"/>' + cross;
  }
  s += '<path d="M704 334.500 722 335.500 790 338.500 812 339.500" fill="none" stroke="#fff" shape-rendering="crispEdges"/>';
  s += line('axis', 311, 372, 311, 615) + line('axis', 310, 615, 1320, 615);
  for (i = 0; i < 9; i++) {
    y = Math.round(372 + 28.65 * i) + 0.5;
    s += line('tick', 307, y, 310, y) + '<text x="305" y="' + (y + 4) + '" text-anchor="end">' + (19 - i) + '</text>';
    for (k = 1; k < 4; k++) if (y + k * 7 < 614) s += line('tick', 308, Math.round(y + k * 7) + 0.5, 310, Math.round(y + k * 7) + 0.5);
  }
  [800,960,1120,1320,1560,1840,2200,2600,3080,3640,4280,5120,6040,7160,8480,10200].forEach(function (v, n) {
    var x = xi(n);
    s += line('tick', x, 616, x, 620);
    if (n < 15) for (var m = 1; m < 4; m++) s += line('tick', Math.round(x + m * 16.8) + 0.5, 616, Math.round(x + m * 16.8) + 0.5, 618);
    s += '<text transform="translate(' + (x + 3) + ' 621) rotate(-90)" text-anchor="end">' + v + '</text>';
  });
  s += '<text class="bold head" x="916" y="124" text-anchor="middle">Состав смеси от оборотов и дросселя</text>';
  s += '<text class="bold" x="815" y="676" text-anchor="middle">Обороты коленвала, об/мин</text>';
  s += '<text class="bold" transform="translate(283 493) rotate(-90)" text-anchor="middle">Отношение воздух/топливо</text>';
  document.getElementById('chart').innerHTML = s;

  var c = '';
  for (i = 0; i <= 12; i++) c += line('tick', 0.5 + i * 7, 0, 0.5 + i * 7, 71);
  for (i = 0; i <= 7; i++) c += line('tick', 0, 0.5 + i * 10, 85, 0.5 + i * 10);
  c += '<path d="M5 5.500h18C50 7 65 25 80 66" fill="none" stroke="#2020c0"/><path d="M5 66.500h18C50 64 66 45 80 5" fill="none" stroke="#d02828"/>';
  document.getElementById('curve').innerHTML = c;
})();
```
